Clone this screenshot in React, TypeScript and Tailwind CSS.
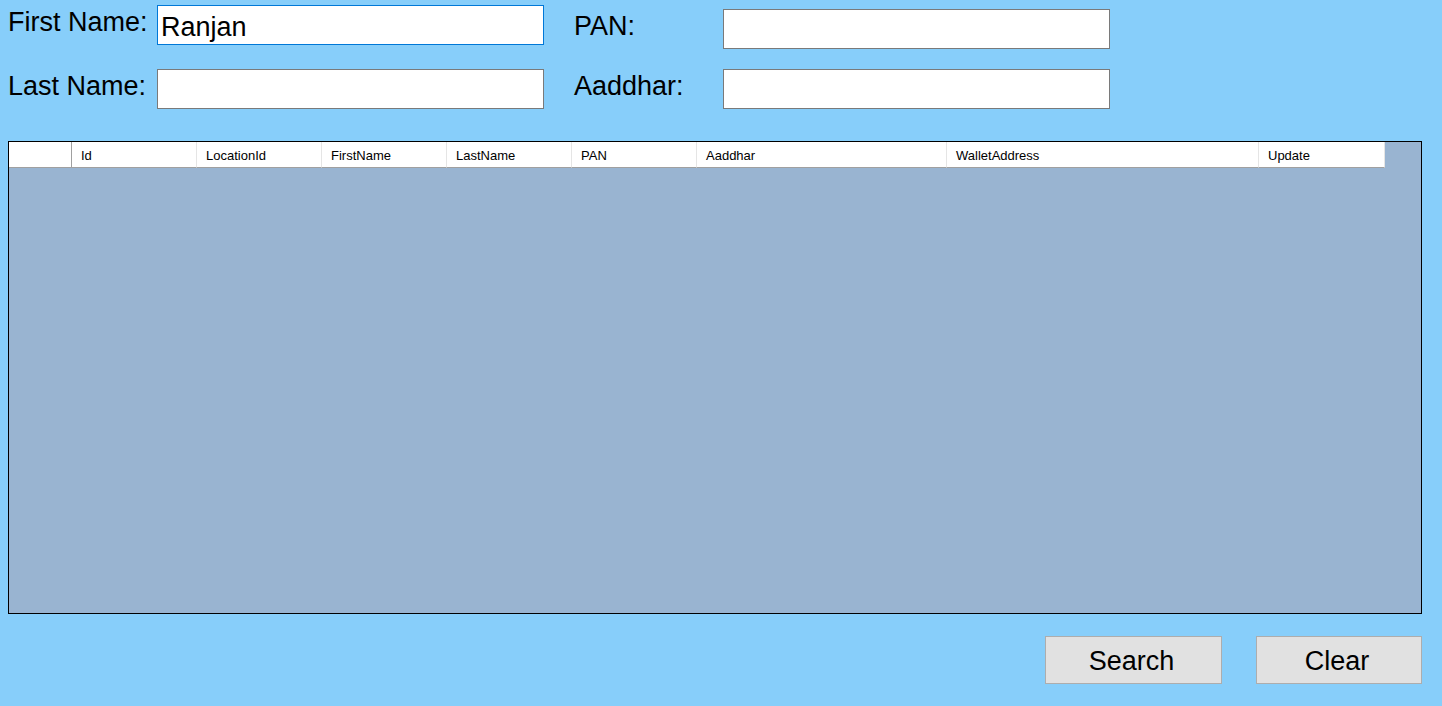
import { useState } from "react";

type FieldProps = {
  id: string;
  label: string;
  value: string;
  onChange: (value: string) => void;
};

function Field({ id, label, value, onChange }: FieldProps) {
  return (
    <div className="flex items-start">
      <label htmlFor={id} className="w-[149px] shrink-0 whitespace-nowrap leading-[34px]">
        {label}
      </label>
      <input
        id={id}
        type="text"
        autoComplete="off"
        spellCheck={false}
        autoFocus={id === "firstName"}
        value={value}
        onChange={(e) => onChange(e.target.value)}
        className="h-10 w-full min-w-0 border border-[#7a7a7a] bg-white px-[3px] pt-1 caret-transparent outline-none focus:border-[#0078d7]"
      />
    </div>
  );
}

const columns = [
  { name: "Id", width: "w-[125px]" },
  { name: "LocationId", width: "w-[125px]" },
  { name: "FirstName", width: "w-[125px]" },
  { name: "LastName", width: "w-[125px]" },
  { name: "PAN", width: "w-[125px]" },
  { name: "Aaddhar", width: "w-[250px]" },
  { name: "WalletAddress", width: "w-[312px]" },
  { name: "Update", width: "w-[126px]" },
];

const buttonClass =
  "h-12 border border-[#adadad] bg-[#e1e1e1] pt-0.5 pr-1 hover:border-[#0078d7] hover:bg-[#e5f1fb]";

export default function App() {
  const [firstName, setFirstName] = useState("Ranjan");
  const [lastName, setLastName] = useState("");
  const [pan, setPan] = useState("");
  const [aaddhar, setAaddhar] = useState("");

  const clear = () => {
    setFirstName("");
    setLastName("");
    setPan("");
    setAaddhar("");
  };

  return (
    <form
      onSubmit={(e) => e.preventDefault()}
      className="flex min-h-screen flex-col bg-[#87cefa] pr-5 pb-[22px] pl-2 font-['Liberation_Sans',Arial,sans-serif] text-[27px] text-black"
    >
      <div className="flex gap-[30px]">
        <div className="flex max-w-[536px] flex-1 flex-col gap-6 pt-[5px]">
          <Field id="firstName" label="First Name:" value={firstName} onChange={setFirstName} />
          <Field id="lastName" label="Last Name:" value={lastName} onChange={setLastName} />
        </div>
        <div className="flex max-w-[536px] flex-1 flex-col gap-5 pt-[9px]">
          <Field id="pan" label="PAN:" value={pan} onChange={setPan} />
          <Field id="aaddhar" label="Aaddhar:" value={aaddhar} onChange={setAaddhar} />
        </div>
      </div>

      <div className="mt-8 flex-1 overflow-auto border border-black bg-[#99b4d1]">
        <table className="w-[1376px] table-fixed border-separate border-spacing-0 text-[13px]">
          <thead>
            <tr className="h-[26px] bg-white">
              <th scope="col" aria-label="Row" className="w-[63px] border-r border-b border-[#a0a0a0]" />
              {columns.map((column) => (
                <th
                  key={column.name}
                  scope="col"
                  className={`border-r border-b border-r-[#e5e5e5] border-b-[#a0a0a0] px-[9px] pt-0.5 pb-0 text-left font-normal ${column.width}`}
                >
                  {column.name}
                </th>
              ))}
            </tr>
          </thead>
          <tbody />
        </table>
      </div>

      <div className="mt-[22px] flex justify-end gap-[34px]">
        <button type="submit" className={`w-[177px] ${buttonClass}`}>
          Search
        </button>
        <button type="button" onClick={clear} className={`w-[166px] ${buttonClass}`}>
          Clear
        </button>
      </div>
    </form>
  );
}
